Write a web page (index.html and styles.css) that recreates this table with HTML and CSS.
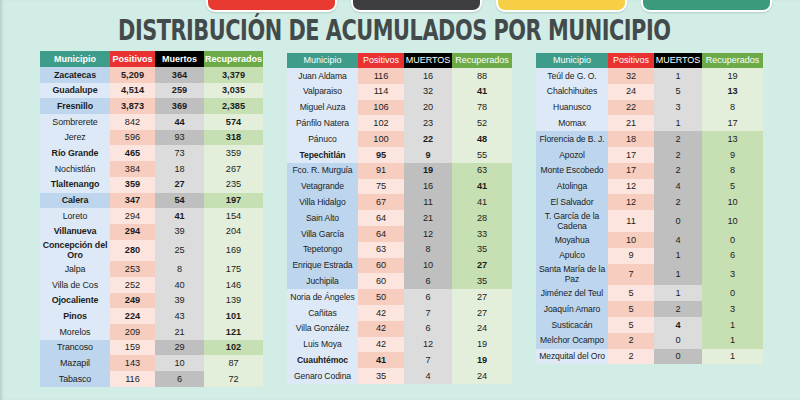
FILE: index.html
```html
<!DOCTYPE html>
<html lang="es">
<head>
<meta charset="utf-8">
<title>Distribución de acumulados por municipio</title>
<link rel="stylesheet" href="styles.css">
</head>
<body>
<div class="page">
  <div class="topbar">
    <div class="pill red"></div>
    <div class="pill dark"></div>
    <div class="pill yellow"></div>
    <div class="pill teal"></div>
  </div>
  <h1 class="title"><span class="title-text">DISTRIBUCIÓN DE ACUMULADOS POR MUNICIPIO</span></h1>
  <div class="tables">
    <table class="t t1">
      <colgroup><col class="c1"><col class="c2"><col class="c3"><col class="c4"></colgroup>
      <thead><tr><th>Municipio</th><th>Positivos</th><th>Muertos</th><th>Recuperados</th></tr></thead>
      <tbody>
        <tr><td class="d b">Zacatecas</td><td class="b">5,209</td><td class="d b">364</td><td class="d b">3,379</td></tr>
        <tr><td class="b">Guadalupe</td><td class="b">4,514</td><td class="b">259</td><td class="b">3,035</td></tr>
        <tr><td class="d b">Fresnillo</td><td class="b">3,873</td><td class="d b">369</td><td class="d b">2,385</td></tr>
        <tr><td>Sombrerete</td><td>842</td><td class="b">44</td><td class="b">574</td></tr>
        <tr><td>Jerez</td><td>596</td><td class="d">93</td><td class="d b">318</td></tr>
        <tr><td class="b">Río Grande</td><td class="b">465</td><td>73</td><td>359</td></tr>
        <tr><td>Nochistlán</td><td>384</td><td>18</td><td>267</td></tr>
        <tr><td class="b">Tlaltenango</td><td class="b">359</td><td class="b">27</td><td>235</td></tr>
        <tr><td class="d b">Calera</td><td class="b">347</td><td class="d b">54</td><td class="d b">197</td></tr>
        <tr><td>Loreto</td><td>294</td><td class="b">41</td><td>154</td></tr>
        <tr><td class="b">Villanueva</td><td class="b">294</td><td>39</td><td>204</td></tr>
        <tr class="dbl"><td class="b">Concepción del<br>Oro</td><td class="b">280</td><td>25</td><td>169</td></tr>
        <tr><td>Jalpa</td><td>253</td><td>8</td><td>175</td></tr>
        <tr><td>Villa de Cos</td><td>252</td><td>40</td><td>146</td></tr>
        <tr><td class="b">Ojocaliente</td><td class="b">249</td><td>39</td><td>139</td></tr>
        <tr><td class="b">Pinos</td><td class="b">224</td><td>43</td><td class="b">101</td></tr>
        <tr><td>Morelos</td><td>209</td><td>21</td><td class="b">121</td></tr>
        <tr><td class="d">Trancoso</td><td>159</td><td class="d">29</td><td class="d b">102</td></tr>
        <tr><td class="d">Mazapil</td><td>143</td><td>10</td><td>87</td></tr>
        <tr><td class="d">Tabasco</td><td>116</td><td class="d">6</td><td>72</td></tr>
      </tbody>
    </table>

    <table class="t t2">
      <colgroup><col class="c1"><col class="c2"><col class="c3"><col class="c4"></colgroup>
      <thead><tr><th>Municipio</th><th>Positivos</th><th>MUERTOS</th><th>Recuperados</th></tr></thead>
      <tbody>
        <tr><td>Juan Aldama</td><td>116</td><td>16</td><td>88</td></tr>
        <tr><td>Valparaiso</td><td>114</td><td>32</td><td class="b">41</td></tr>
        <tr><td>Miguel Auza</td><td>106</td><td>20</td><td>78</td></tr>
        <tr><td>Pánfilo Natera</td><td>102</td><td>23</td><td>52</td></tr>
        <tr><td>Pánuco</td><td>100</td><td class="b">22</td><td class="b">48</td></tr>
        <tr><td class="b">Tepechitlán</td><td class="b">95</td><td class="b">9</td><td>55</td></tr>
        <tr><td class="d">Fco. R. Murguía</td><td>91</td><td class="d b">19</td><td class="d">63</td></tr>
        <tr><td class="d">Vetagrande</td><td>75</td><td class="d">16</td><td class="d b">41</td></tr>
        <tr><td class="d">Villa Hidalgo</td><td>67</td><td class="d">11</td><td class="d">41</td></tr>
        <tr><td class="d">Sain Alto</td><td>64</td><td class="d">21</td><td class="d">28</td></tr>
        <tr><td class="d">Villa García</td><td>64</td><td class="d">12</td><td class="d">33</td></tr>
        <tr><td class="d">Tepetongo</td><td>63</td><td class="d">8</td><td class="d">35</td></tr>
        <tr><td class="d">Enrique Estrada</td><td>60</td><td class="d">10</td><td class="d b">27</td></tr>
        <tr><td class="d">Juchipila</td><td>60</td><td class="d">6</td><td class="d">35</td></tr>
        <tr><td>Noria de Ángeles</td><td>50</td><td>6</td><td>27</td></tr>
        <tr><td>Cañitas</td><td>42</td><td>7</td><td>27</td></tr>
        <tr><td>Villa González</td><td>42</td><td>6</td><td>24</td></tr>
        <tr><td>Luis Moya</td><td>42</td><td>12</td><td>19</td></tr>
        <tr><td class="b">Cuauhtémoc</td><td class="b">41</td><td>7</td><td class="b">19</td></tr>
        <tr><td>Genaro Codina</td><td>35</td><td>4</td><td>24</td></tr>
      </tbody>
    </table>

    <table class="t t3">
      <colgroup><col class="c1"><col class="c2"><col class="c3"><col class="c4"></colgroup>
      <thead><tr><th>Municipio</th><th>Positivos</th><th>MUERTOS</th><th>Recuperados</th></tr></thead>
      <tbody>
        <tr><td>Teúl de G. O.</td><td>32</td><td>1</td><td>19</td></tr>
        <tr><td>Chalchihuites</td><td>24</td><td>5</td><td class="b">13</td></tr>
        <tr><td>Huanusco</td><td>22</td><td>3</td><td>8</td></tr>
        <tr><td>Momax</td><td>21</td><td>1</td><td>17</td></tr>
        <tr><td class="d">Florencia de B. J.</td><td>18</td><td class="d">2</td><td class="d">13</td></tr>
        <tr><td class="d">Apozol</td><td>17</td><td class="d">2</td><td class="d">9</td></tr>
        <tr><td class="d">Monte Escobedo</td><td>17</td><td class="d">2</td><td class="d">8</td></tr>
        <tr><td class="d">Atolinga</td><td>12</td><td class="d">4</td><td class="d">5</td></tr>
        <tr><td class="d">El Salvador</td><td>12</td><td class="d">2</td><td class="d">10</td></tr>
        <tr class="dbl"><td class="d">T. García de la<br>Cadena</td><td>11</td><td class="d">0</td><td class="d">10</td></tr>
        <tr><td class="d">Moyahua</td><td>10</td><td class="d">4</td><td class="d">0</td></tr>
        <tr><td class="d">Apulco</td><td>9</td><td class="d">1</td><td class="d">6</td></tr>
        <tr class="dbl"><td class="d">Santa María de la<br>Paz</td><td>7</td><td class="d">1</td><td class="d">3</td></tr>
        <tr><td class="d">Jiménez del Teul</td><td>5</td><td>1</td><td class="d">0</td></tr>
        <tr><td class="d">Joaquín Amaro</td><td>5</td><td class="d">2</td><td class="d">3</td></tr>
        <tr><td class="d">Susticacán</td><td>5</td><td class="b">4</td><td class="d">1</td></tr>
        <tr><td class="d">Melchor Ocampo</td><td>2</td><td>0</td><td class="d">1</td></tr>
        <tr><td>Mezquital del Oro</td><td>2</td><td class="d">0</td><td>1</td></tr>
      </tbody>
    </table>
  </div>
</div>
</body>
</html>
```

FILE: styles.css
```css
html, body {
  margin: 0;
  padding: 0;
}
body {
  width: 800px;
  height: 400px;
  overflow: hidden;
  background: #d1ede6;
  font-family: "Liberation Sans", Arial, sans-serif;
  color: #1c1c1c;
}
.page {
  height: 400px;
  box-shadow: inset 3px 0 3px -1px rgba(0, 0, 0, 0.12);
}
.topbar {
  display: flex;
  gap: 14px;
  padding-left: 206px;
  height: 13px;
}
.pill {
  width: 127px;
  height: 10px;
  border: 2px solid #ffffff;
  border-top: none;
  border-radius: 0 0 9px 9px;
  box-shadow: 0 1px 2px rgba(0, 0, 0, 0.15);
}
.pill.red { background: #e83a30; }
.pill.dark { background: #3e3d40; }
.pill.yellow { background: #f6cf47; }
.pill.teal { background: #3b9a7d; }

.title {
  margin: 2px 0 0 0;
  padding-right: 12px;
  text-align: center;
  font-family: "DejaVu Sans Condensed", "Liberation Sans", sans-serif;
  font-weight: bold;
  font-size: 29px;
  line-height: 30px;
  letter-spacing: -0.6px;
  color: #434a4b;
}
.title-text {
  display: inline-block;
  transform: scaleX(0.8);
}

.tables {
  display: flex;
  align-items: flex-start;
  gap: 24px;
  padding-left: 40px;
  margin-top: 6px;
}
.t {
  border-collapse: collapse;
  table-layout: fixed;
  font-size: 9.2px;
}
.t2, .t3 { margin-top: 2px; }
.t1 { width: 223px; }
.t1 .c1 { width: 70px; }
.t1 .c2 { width: 45px; }
.t1 .c3 { width: 49px; }
.t1 .c4 { width: 59px; }
.t2 { width: 225px; }
.t2 .c1 { width: 71px; }
.t2 .c2 { width: 46px; }
.t2 .c3 { width: 48px; }
.t2 .c4 { width: 60px; }
.t3 { width: 227px; }
.t3 .c1 { width: 72px; }
.t3 .c2 { width: 46px; }
.t3 .c3 { width: 48px; }
.t3 .c4 { width: 61px; }

.t th, .t td {
  padding: 0;
  text-align: center;
  white-space: nowrap;
}
.t th {
  height: 15px;
  line-height: 15px;
  color: #ffffff;
  font-weight: normal;
  font-size: 9px;
}
.t1 th { height: 16px; font-weight: bold; }
.t th:nth-child(1) { background: #3e9d8a; }
.t th:nth-child(2) { background: #e93131; }
.t th:nth-child(3) { background: #000000; }
.t th:nth-child(4) { background: #6dab48; }

.t td {
  height: 15.7px;
  line-height: 10.5px;
}
.t2 td, .t3 td { height: 15.8px; }
.t td:nth-child(1) { font-size: 8.9px; letter-spacing: -0.1px; }
.t2 td:nth-child(1), .t3 td:nth-child(1) { font-size: 8.6px; }
.t tr.dbl td { height: 21.8px; }
.t td.b { font-weight: bold; }

.t td:nth-child(1) { background: #dde9f6; }
.t td:nth-child(1).d { background: #bdd6ee; }
.t td:nth-child(2) { background: #fce5de; }
.t tbody tr:nth-child(odd) td:nth-child(2) { background: #f7cdc0; }
.t td:nth-child(3) { background: #dcdcdc; }
.t td:nth-child(3).d { background: #bfbfbf; }
.t td:nth-child(4) { background: #e3efda; }
.t td:nth-child(4).d { background: #c6e0b4; }
```
